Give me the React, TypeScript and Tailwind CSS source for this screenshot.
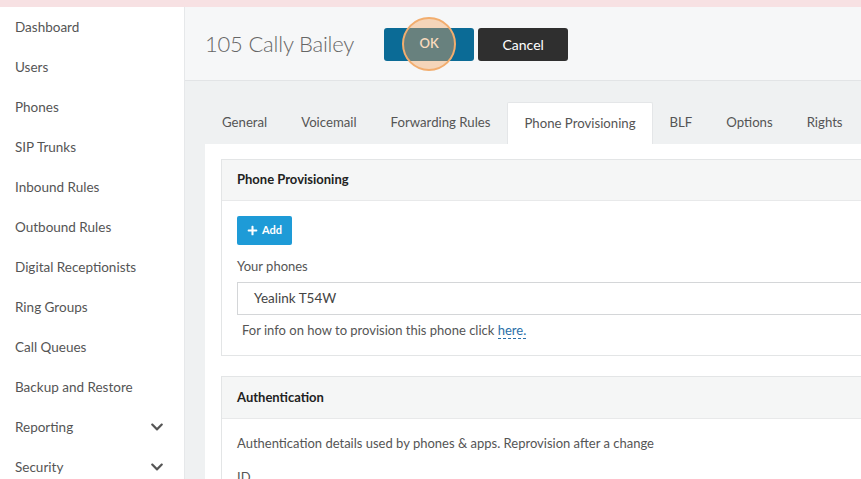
import React from 'react';
import { FaChevronDown, FaPlus } from 'react-icons/fa';

const navItems = [
  { label: 'Dashboard' },
  { label: 'Users' },
  { label: 'Phones' },
  { label: 'SIP Trunks' },
  { label: 'Inbound Rules' },
  { label: 'Outbound Rules' },
  { label: 'Digital Receptionists' },
  { label: 'Ring Groups' },
  { label: 'Call Queues' },
  { label: 'Backup and Restore' },
  { label: 'Reporting', sub: true },
  { label: 'Security', sub: true },
];

const tabs = ['General', 'Voicemail', 'Forwarding Rules', 'Phone Provisioning', 'BLF', 'Options', 'Rights'];

export default function App() {
  const active = 'Phone Provisioning';

  return (
    <div className="w-[861px] h-[479px] overflow-hidden flex flex-col text-[#555] font-['Lato',sans-serif]">
      <div className="h-[7px] shrink-0 bg-[#f7e1e3]" />

      <div className="flex flex-1 min-h-0">
        {/* Sidebar */}
        <aside className="w-[185px] shrink-0 bg-white border-r border-[#e6e8ea]">
          {navItems.map(item => (
            <div key={item.label} className="h-[40px] flex items-center justify-between pl-[15px] pr-[20px] text-[13.5px]">
              <span>{item.label}</span>
              {item.sub && <FaChevronDown className="text-[#555] w-[14px] h-[14px]" />}
            </div>
          ))}
        </aside>

        {/* Main */}
        <main className="flex-1 min-w-0 bg-[#eff1f2] flex flex-col overflow-hidden">
          <div className="h-[74px] shrink-0 bg-[#f6f7f8] border-b border-[#e2e4e6] flex items-center pl-5 gap-[30px]">
            <h1 className="text-[22px] font-light text-[#666] leading-none tracking-[-0.2px]">105 Cally Bailey</h1>
            <div className="flex gap-[4px] mt-[1px]">
              <button className="relative w-[90px] h-[33px] rounded-[3px] bg-[#0b6b96] text-white text-[13px] font-semibold">
                OK
                <span className="absolute left-1/2 top-1/2 -translate-x-1/2 -translate-y-1/2 w-[54px] h-[54px] rounded-full bg-[#f4a35b]/40 border-2 border-[#f2ad6e]" />
              </button>
              <button className="w-[90px] h-[33px] rounded-[3px] bg-[#2f2f2f] text-white text-[14px]">Cancel</button>
            </div>
          </div>

          <div className="pl-5 pt-[21px] flex-1 w-[720px]">
            <div className="flex h-[42px] whitespace-nowrap">
              {tabs.map(t => (
                <div
                  key={t}
                  className={`shrink-0 px-4 flex items-center text-[13.2px] ${t === active ? 'bg-white border-t border-x border-[#e4e6e8] rounded-t-[2px]' : 'border border-transparent'}`}
                >
                  {t}
                </div>
              ))}
            </div>

            <div className="bg-white pl-4 pt-[15px] pb-6">
              {/* Phone Provisioning card */}
              <div className="border border-[#e3e5e6]">
                <div className="h-[41px] bg-[#f5f6f6] border-b border-[#e8e9ea] flex items-center px-[15px] text-[13px] font-bold text-[#222]">
                  Phone Provisioning
                </div>
                <div className="px-[15px] pt-[15px] pb-[15px]">
                  <button className="h-[29px] px-[10px] rounded-[2px] bg-[#1e9bd7] text-white text-[11px] font-bold flex items-center gap-[4px]">
                    <FaPlus className="w-[11px] h-[11px]" />
                    Add
                  </button>
                  <div className="mt-[12px] text-[13px]">Your phones</div>
                  <div className="mt-[5px] h-[33px] border border-[#d4d6d8] flex items-center pl-4 text-[13.5px] text-[#444]">
                    Yealink T54W
                  </div>
                  <div className="mt-[6px] pl-[5px] text-[13px]">
                    For info on how to provision this phone click{' '}
                    <span className="text-[#2a6fa8] border-b border-dashed border-[#2a6fa8]">here.</span>
                  </div>
                </div>
              </div>

              {/* Authentication card */}
              <div className="mt-[20px] border border-[#e3e5e6]">
                <div className="h-[42px] bg-[#f5f6f6] border-b border-[#e8e9ea] flex items-center px-[15px] text-[13px] font-bold text-[#222]">
                  Authentication
                </div>
                <div className="px-[15px] pt-[15px] text-[13px]">
                  <p>Authentication details used by phones &amp; apps. Reprovision after a change</p>
                  <p className="mt-[14px]">ID</p>
                </div>
              </div>
            </div>
          </div>
        </main>
      </div>
    </div>
  );
}
